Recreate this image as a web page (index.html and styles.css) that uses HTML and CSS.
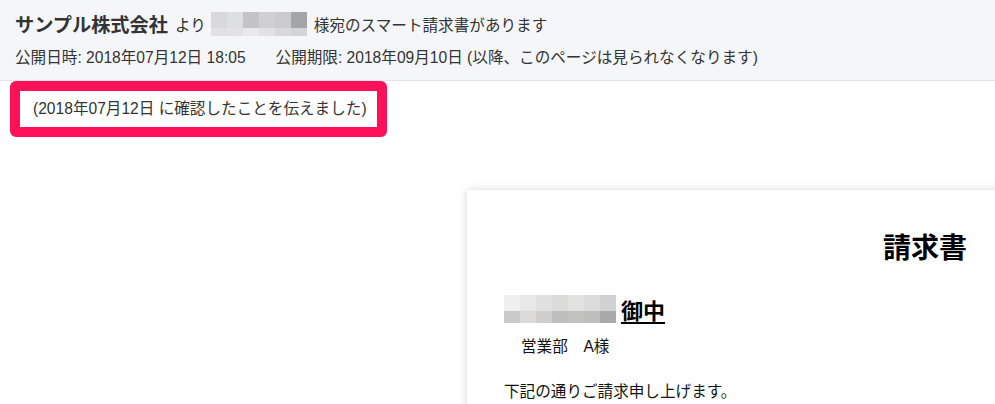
FILE: index.html
```html
<!DOCTYPE html>
<html lang="ja">
<head>
<meta charset="utf-8">
<title>スマート請求書</title>
<link rel="stylesheet" href="styles.css">
</head>
<body>
<header class="notice">
  <div class="notice-title">
    <strong class="sender">サンプル株式会社</strong>
    <span class="from">より</span>
    <span class="mosaic mosaic--name" aria-label="宛名">
      <i></i><i></i><i></i><i></i><i></i><i></i>
      <i></i><i></i><i></i><i></i><i></i><i></i>
    </span>
    <span>様宛のスマート請求書があります</span>
  </div>
  <div class="notice-meta">
    <span>公開日時: 2018年07月12日 18:05</span>
    <span>公開期限: 2018年09月10日 (以降、このページは見られなくなります)</span>
  </div>
</header>
<main class="page">
  <p class="confirm">(2018年07月12日 に確認したことを伝えました)</p>
  <article class="invoice">
    <h1 class="invoice-title">請求書</h1>
    <div class="recipient">
      <span class="mosaic mosaic--client" aria-label="取引先名">
        <i></i><i></i><i></i><i></i><i></i><i></i><i></i>
        <i></i><i></i><i></i><i></i><i></i><i></i><i></i>
      </span>
      <span class="honorific">御中</span>
    </div>
    <p class="contact">営業部　A様</p>
    <p class="lead">下記の通りご請求申し上げます。</p>
  </article>
</main>
</body>
</html>
```

FILE: styles.css
```css
html, body {
  margin: 0;
  padding: 0;
  overflow: hidden;
  background: #ffffff;
}

body {
  font-family: "Liberation Sans", "Noto Sans CJK JP", sans-serif;
  font-size: 15.6px;
  color: #333333;
}

/* top notice bar */
.notice {
  height: 70px;
  padding: 10px 15px 0;
  background: #f5f6fa;
  border-bottom: 1px solid #e2e3e7;
}

.notice-title {
  display: flex;
  align-items: center;
  height: 27px;
  white-space: nowrap;
}

.sender {
  font-size: 19.2px;
  font-weight: bold;
  margin-right: 7px;
}

.from {
  margin-right: 5px;
}

.notice-meta {
  display: flex;
  gap: 30px;
  margin-top: 10px;
  line-height: 21px;
  white-space: nowrap;
}

/* pixelated name blocks */
.mosaic {
  display: grid;
  flex: none;
}

.mosaic i {
  display: block;
}

.mosaic--name {
  grid-template-columns: repeat(6, 16px);
  grid-template-rows: 16px 8px;
  margin-right: 7px;
}

.mosaic--name i:nth-child(1) { background: #d9d9db; }
.mosaic--name i:nth-child(2) { background: #dde0e3; }
.mosaic--name i:nth-child(3) { background: #c4c4c6; }
.mosaic--name i:nth-child(4) { background: #d0d0d2; }
.mosaic--name i:nth-child(5) { background: #cbcbcd; }
.mosaic--name i:nth-child(6) { background: #a3a5a8; }
.mosaic--name i:nth-child(7) { background: #e1e1e3; }
.mosaic--name i:nth-child(8) { background: #e2e2e4; }
.mosaic--name i:nth-child(9) { background: #e9e9eb; }
.mosaic--name i:nth-child(10) { background: #e2e2e4; }
.mosaic--name i:nth-child(11) { background: #d9d9db; }
.mosaic--name i:nth-child(12) { background: #d3d4d6; }

.mosaic--client {
  grid-template-columns: repeat(7, 16px);
  grid-template-rows: 16px 12px;
  margin-right: 5px;
}

.mosaic--client i:nth-child(1) { background: #f0f0f0; }
.mosaic--client i:nth-child(2) { background: #e8e8e8; }
.mosaic--client i:nth-child(3) { background: #e1e1e1; }
.mosaic--client i:nth-child(4) { background: #dcdbda; }
.mosaic--client i:nth-child(5) { background: #e2e2e0; }
.mosaic--client i:nth-child(6) { background: #dcdcdc; }
.mosaic--client i:nth-child(7) { background: #d0d1d3; }
.mosaic--client i:nth-child(8) { background: #cacaca; }
.mosaic--client i:nth-child(9) { background: #dcdbd9; }
.mosaic--client i:nth-child(10) { background: #cfcecc; }
.mosaic--client i:nth-child(11) { background: #bebebe; }
.mosaic--client i:nth-child(12) { background: #c2c3bf; }
.mosaic--client i:nth-child(13) { background: #bebebe; }
.mosaic--client i:nth-child(14) { background: #a9a9ab; }

/* confirmation badge */
.page {
  padding: 0 10px;
}

.confirm {
  width: fit-content;
  height: 36px;
  margin: 0;
  padding: 0 10px 0 13px;
  line-height: 36px;
  border: 10px solid #fe1159;
  border-radius: 6px;
  background: #ffffff;
  white-space: nowrap;
}

/* invoice sheet */
.invoice {
  width: 463px;
  margin: 53px 0 0 457px;
  padding: 39px 37px 40px;
  background: #ffffff;
  box-shadow: 0 0 9px rgba(0, 0, 0, 0.16);
  color: #111111;
}

.invoice-title {
  margin: 0;
  font-size: 28px;
  line-height: 40px;
  font-weight: bold;
  text-align: right;
  color: #000000;
}

.recipient {
  display: flex;
  align-items: center;
  height: 28px;
  margin-top: 26px;
}

.honorific {
  font-size: 22px;
  font-weight: bold;
  color: #000000;
  text-decoration: underline;
  text-decoration-thickness: 2px;
  text-underline-offset: 3px;
}

.contact {
  margin: 13px 0 0;
  padding-left: 17px;
  line-height: 22px;
}

.lead {
  margin: 23px 0 0;
  line-height: 22px;
}
```
